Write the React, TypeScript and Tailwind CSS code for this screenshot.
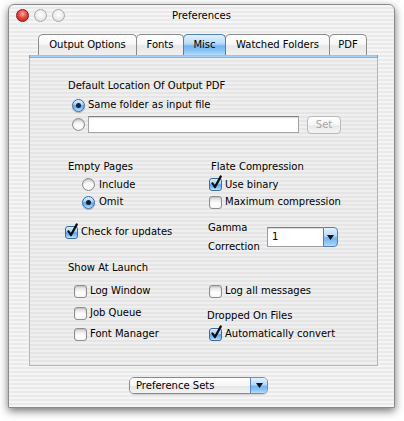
import React from "react";

function Radio({ on }: { on?: boolean }) {
  return on ? (
    <span className="w-[13px] h-[13px] rounded-full border border-[#3a6aa8] bg-[linear-gradient(180deg,#dcefff_0%,#a9d3f8_40%,#5ea8ec_52%,#7fbdf3_75%,#c3e3fd_100%)] flex items-center justify-center shrink-0 shadow-[0_1px_1px_rgba(0,0,0,0.25)]">
      <span className="w-[5px] h-[5px] rounded-full bg-[#10213d]" />
    </span>
  ) : (
    <span className="w-[13px] h-[13px] rounded-full border border-[#8a8a8a] bg-[linear-gradient(180deg,#dedede_0%,#ffffff_55%,#f7f7f7_100%)] shrink-0 shadow-[inset_0_1px_2px_rgba(0,0,0,0.18)]" />
  );
}

function Check({ on }: { on?: boolean }) {
  return (
    <span
      className={
        on
          ? "relative w-[13px] h-[13px] rounded-[3px] border border-[#3a6aa8] shrink-0 bg-[linear-gradient(180deg,#dcefff_0%,#a9d3f8_40%,#5ea8ec_52%,#7fbdf3_75%,#c3e3fd_100%)]"
          : "relative w-[13px] h-[13px] rounded-[3px] border border-[#8e8e8e] shrink-0 bg-[linear-gradient(180deg,#dcdcdc_0%,#ffffff_60%,#f6f6f6_100%)] shadow-[inset_0_1px_2px_rgba(0,0,0,0.15)]"
      }
    >
      {on && (
        <svg
          className="absolute left-[0px] top-[-4px]"
          width="13"
          height="15"
          viewBox="0 0 13 15"
        >
          <path
            d="M2.4 8.4 L5 12 L10.8 1.4"
            stroke="#0d0d0d"
            strokeWidth="2.2"
            fill="none"
            strokeLinecap="round"
            strokeLinejoin="round"
          />
        </svg>
      )}
    </span>
  );
}

function Arrow() {
  return (
    <svg width="7" height="5" viewBox="0 0 7 5">
      <path d="M0 0 L7 0 L3.5 5 Z" fill="#111" />
    </svg>
  );
}

function Tab({ label, w, on }: { label: string; w: string; on?: boolean }) {
  return (
    <div
      className={
        on
          ? `${w} h-[21px] -ml-[1px] rounded-t-[5px] border border-b-0 border-[#4f7fb8] bg-[linear-gradient(180deg,#e2f1ff_0%,#b4d9fa_45%,#72b4f0_55%,#8cc4f4_80%,#b7dcfb_100%)] flex items-center justify-center relative z-10`
          : `${w} h-[21px] -ml-[1px] first:ml-0 rounded-t-[5px] border border-b-0 border-[#8c8c8c] bg-[linear-gradient(180deg,#ffffff_0%,#f7f7f7_45%,#e8e8e8_55%,#f0f0f0_100%)] flex items-center justify-center`
      }
    >
      {label}
    </div>
  );
}

export default function App() {
  return (
    <div className="w-[404px] h-[421px] bg-white pt-[4px] pl-[8px] overflow-hidden font-['DejaVu_Sans','Liberation_Sans',sans-serif] text-[10px] text-black leading-none">
      <div className="w-[387px] h-[404px] rounded-t-[6px] border border-[#8a8a8a] shadow-[0_3px_8px_rgba(0,0,0,0.55)] bg-[image:repeating-linear-gradient(180deg,#f5f5f5_0px,#f5f5f5_2px,#eaeaea_2px,#eaeaea_4px)] flex flex-col">
        {/* title bar */}
        <div className="h-[21px] grid grid-cols-[1fr_auto_1fr] items-center rounded-t-[6px]">
          <div className="flex items-center gap-[5px] pl-[7px]">
            <span className="w-[13px] h-[13px] rounded-full border border-[#8a1c1c] bg-[radial-gradient(circle_at_50%_35%,#ffb0a8_0%,#e8483e_45%,#b5120f_100%)]" />
            <span className="w-[13px] h-[13px] rounded-full border border-[#a8a8a8] bg-[radial-gradient(circle_at_50%_40%,#ffffff_0%,#ececec_55%,#cfcfcf_100%)]" />
            <span className="w-[13px] h-[13px] rounded-full border border-[#a8a8a8] bg-[radial-gradient(circle_at_50%_40%,#ffffff_0%,#ececec_55%,#cfcfcf_100%)]" />
          </div>
          <div className="text-[10px]">Preferences</div>
          <div />
        </div>

        {/* tabs */}
        <div className="mt-[8px] pl-[29px] flex">
          <Tab label="Output Options" w="w-[99px]" />
          <Tab label="Fonts" w="w-[48px]" />
          <Tab label="Misc" w="w-[43px]" on />
          <Tab label="Watched Folders" w="w-[105px]" />
          <Tab label="PDF" w="w-[38px]" />
        </div>

        {/* panel */}
        <div className="ml-[20px] w-[349px] h-[311px] flex flex-col">
          <div className="h-[3px] bg-[linear-gradient(180deg,#8dbdec_0%,#a9d0f5_50%,#6aa3dd_100%)] border-x border-[#6f9fd2]" />
          <div className="flex-1 border-x border-b border-[#b6b6b6] bg-[image:repeating-linear-gradient(180deg,#efefef_0px,#efefef_2px,#e5e5e5_2px,#e5e5e5_4px)] flex flex-col pt-[19px]">
            {/* A */}
            <div className="h-[18px] flex items-center pl-[38px]">
              Default Location Of Output PDF
            </div>
            {/* B */}
            <div className="mt-[1px] h-[18px] flex items-center pl-[42px] gap-[3px]">
              <Radio on />
              <span>Same folder as input file</span>
            </div>
            {/* C */}
            <div className="mt-[1px] h-[19px] flex items-center pl-[42px]">
              <Radio />
              <div className="ml-[3px] w-[211px] h-[17px] bg-white border border-[#a4a4a4] border-t-[#808080] shadow-[inset_0_1px_1px_rgba(0,0,0,0.15)]" />
              <div className="ml-[8px] w-[34px] h-[18px] rounded-[4px] border border-[#b9b9b9] bg-[linear-gradient(180deg,#ffffff_0%,#f6f6f6_50%,#e9e9e9_55%,#f4f4f4_100%)] text-[#a6a6a6] flex items-center justify-center">
                Set
              </div>
            </div>
            {/* D */}
            <div className="mt-[24px] h-[18px] flex items-center">
              <div className="w-[179px] pl-[38px]">Empty Pages</div>
              <div className="pl-[2px]">Flate Compression</div>
            </div>
            {/* E */}
            <div className="h-[17px] flex items-center">
              <div className="w-[179px] pl-[52px] flex items-center gap-[4px]">
                <Radio />
                <span>Include</span>
              </div>
              <div className="flex items-center gap-[3px]">
                <Check on />
                <span>Use binary</span>
              </div>
            </div>
            {/* F */}
            <div className="h-[18px] flex items-center">
              <div className="w-[179px] pl-[52px] flex items-center gap-[4px]">
                <Radio on />
                <span>Omit</span>
              </div>
              <div className="flex items-center gap-[3px]">
                <Check />
                <span>Maximum compression</span>
              </div>
            </div>
            {/* G */}
            <div className="mt-[6px] h-[40px] flex items-start">
              <div className="w-[179px] pl-[35px] mt-[6px] h-[18px] flex items-center gap-[3px]">
                <Check on />
                <span>Check for updates</span>
              </div>
              <div className="flex items-start -ml-[1px]">
                <div className="w-[59px] leading-[19px] pt-[1px]">
                  Gamma
                  <br />
                  Correction
                </div>
                <div className="mt-[10px] flex h-[20px]">
                  <div className="w-[56px] h-[20px] bg-white border border-[#9c9c9c] border-t-[#7c7c7c] border-r-0 shadow-[inset_0_1px_1px_rgba(0,0,0,0.15)] flex items-center pl-[4px]">
                    1
                  </div>
                  <div className="w-[15px] h-[20px] rounded-r-[4px] border border-[#4f7fb8] bg-[linear-gradient(180deg,#e2f1ff_0%,#b4d9fa_45%,#72b4f0_55%,#8cc4f4_80%,#b7dcfb_100%)] flex items-center justify-center">
                    <Arrow />
                  </div>
                </div>
              </div>
            </div>
            {/* H */}
            <div className="mt-[2px] h-[18px] flex items-center pl-[38px]">
              Show At Launch
            </div>
            {/* I */}
            <div className="mt-[5px] h-[18px] flex items-center">
              <div className="w-[179px] pl-[44px] flex items-center gap-[3px]">
                <Check />
                <span>Log Window</span>
              </div>
              <div className="flex items-center gap-[3px]">
                <Check />
                <span>Log all messages</span>
              </div>
            </div>
            {/* J */}
            <div className="mt-[4px] h-[21px] flex items-start">
              <div className="w-[179px] pl-[44px] h-[18px] flex items-center gap-[3px]">
                <Check />
                <span>Job Queue</span>
              </div>
              <div className="-ml-[2px] mt-[3px] h-[18px] flex items-center">
                Dropped On Files
              </div>
            </div>
            {/* K */}
            <div className="h-[18px] flex items-center">
              <div className="w-[179px] pl-[44px] flex items-center gap-[3px]">
                <Check />
                <span>Font Manager</span>
              </div>
              <div className="flex items-center gap-[3px]">
                <Check on />
                <span>Automatically convert</span>
              </div>
            </div>
          </div>
        </div>

        {/* Preference Sets */}
        <div className="mt-[11px] ml-[120px] w-[139px] h-[17px] flex rounded-[5px] border border-[#8a8a8a] overflow-hidden shadow-[0_1px_1px_rgba(0,0,0,0.15)]">
          <div className="flex-1 bg-[linear-gradient(180deg,#ffffff_0%,#f6f6f6_50%,#e6e6e6_55%,#f3f3f3_100%)] flex items-center pl-[6px]">
            Preference Sets
          </div>
          <div className="w-[17px] border-l border-[#5a86bb] bg-[linear-gradient(180deg,#e2f1ff_0%,#b4d9fa_45%,#72b4f0_55%,#8cc4f4_80%,#b7dcfb_100%)] flex items-center justify-center">
            <Arrow />
          </div>
        </div>
      </div>
    </div>
  );
}
